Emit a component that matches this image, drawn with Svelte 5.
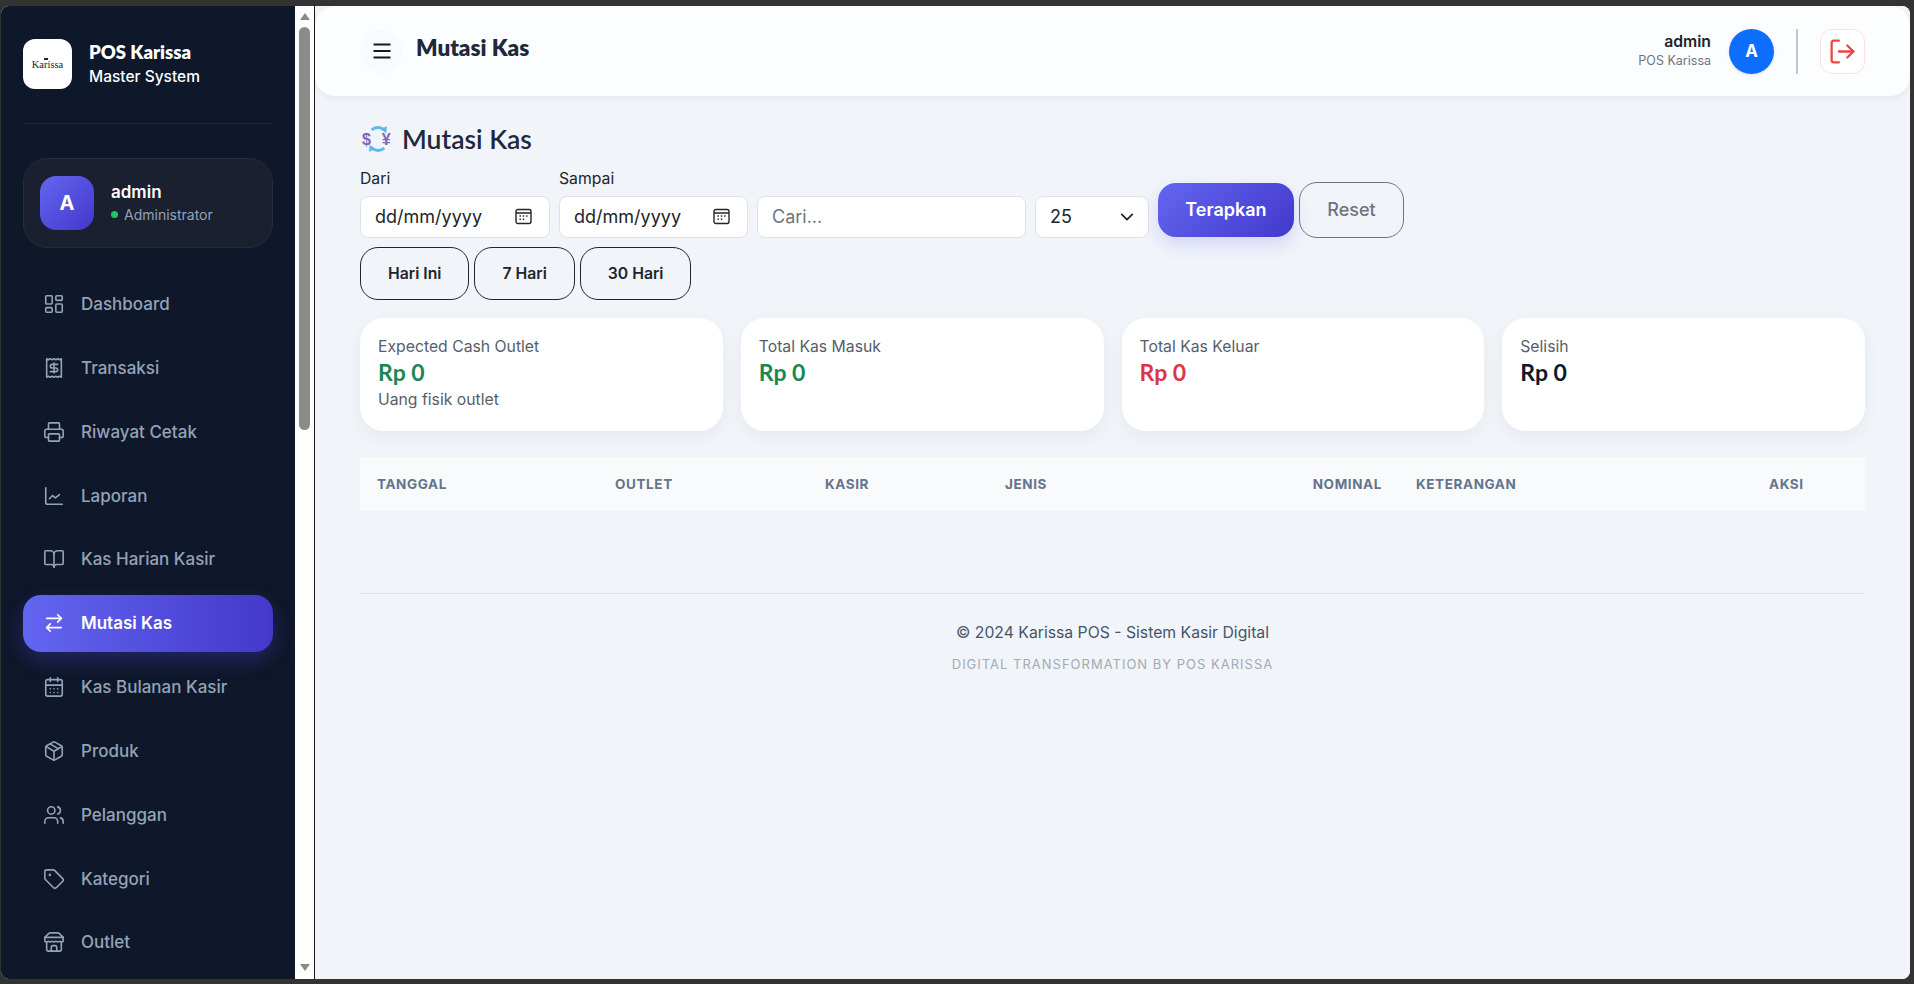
<script>
  const menu = [
    { label: "Dashboard", icon: '<rect x="3" y="3" width="7" height="9" rx="1"/><rect x="14" y="3" width="7" height="5" rx="1"/><rect x="14" y="12" width="7" height="9" rx="1"/><rect x="3" y="16" width="7" height="5" rx="1"/>' },
    { label: "Transaksi", icon: '<path d="M4 2v20l2-1 2 1 2-1 2 1 2-1 2 1 2-1 2 1V2l-2 1-2-1-2 1-2-1-2 1-2-1-2 1Z"/><path d="M16 8h-6a2 2 0 1 0 0 4h4a2 2 0 1 1 0 4H8"/><path d="M12 17.5v-11"/>' },
    { label: "Riwayat Cetak", icon: '<path d="M6 18H4a2 2 0 0 1-2-2v-5a2 2 0 0 1 2-2h16a2 2 0 0 1 2 2v5a2 2 0 0 1-2 2h-2"/><path d="M6 9V3a1 1 0 0 1 1-1h10a1 1 0 0 1 1 1v6"/><rect x="6" y="14" width="12" height="8" rx="1"/>' },
    { label: "Laporan", icon: '<path d="M3 3v16a2 2 0 0 0 2 2h16"/><path d="m7 15 3.5-3.5 3 2.5 4.5-3.5"/>' },
    { label: "Kas Harian Kasir", icon: '<path d="M12 7v14"/><path d="M3 18a1 1 0 0 1-1-1V4a1 1 0 0 1 1-1h5a4 4 0 0 1 4 4 4 4 0 0 1 4-4h5a1 1 0 0 1 1 1v13a1 1 0 0 1-1 1h-6a3 3 0 0 0-3 3 3 3 0 0 0-3-3z"/>' },
    { label: "Mutasi Kas", active: true, icon: '<path d="m16 3 4 4-4 4"/><path d="M20 7H4"/><path d="m8 21-4-4 4-4"/><path d="M4 17h16"/>' },
    { label: "Kas Bulanan Kasir", icon: '<path d="M8 2v4"/><path d="M16 2v4"/><rect x="3" y="4" width="18" height="18" rx="2"/><path d="M3 10h18"/><path d="M8 14h.01"/><path d="M12 14h.01"/><path d="M16 14h.01"/><path d="M8 18h.01"/><path d="M12 18h.01"/><path d="M16 18h.01"/>' },
    { label: "Produk", icon: '<path d="M11 21.73a2 2 0 0 0 2 0l7-4A2 2 0 0 0 21 16V8a2 2 0 0 0-1-1.73l-7-4a2 2 0 0 0-2 0l-7 4A2 2 0 0 0 3 8v8a2 2 0 0 0 1 1.73z"/><path d="M12 22V12"/><path d="m3.3 7 7.703 4.734a2 2 0 0 0 1.994 0L20.7 7"/><path d="m7.5 4.27 9 5.15"/>' },
    { label: "Pelanggan", icon: '<path d="M16 21v-2a4 4 0 0 0-4-4H6a4 4 0 0 0-4 4v2"/><circle cx="9" cy="7" r="4"/><path d="M22 21v-2a4 4 0 0 0-3-3.87"/><path d="M16 3.13a4 4 0 0 1 0 7.75"/>' },
    { label: "Kategori", icon: '<path d="M12.586 2.586A2 2 0 0 0 11.172 2H4a2 2 0 0 0-2 2v7.172a2 2 0 0 0 .586 1.414l8.704 8.704a2.426 2.426 0 0 0 3.42 0l6.58-6.58a2.426 2.426 0 0 0 0-3.42z"/><circle cx="7.5" cy="7.5" r=".5" fill="currentColor"/>' },
    { label: "Outlet", icon: '<path d="m2 7 4.41-4.41A2 2 0 0 1 7.83 2h8.34a2 2 0 0 1 1.42.59L22 7"/><path d="M4 12v8a2 2 0 0 0 2 2h12a2 2 0 0 0 2-2v-8"/><path d="M15 22v-4a2 2 0 0 0-2-2h-2a2 2 0 0 0-2 2v4"/><path d="M2 7h20"/><path d="M22 7v3a2 2 0 0 1-2 2a2.7 2.7 0 0 1-1.59-.63.7.7 0 0 0-.82 0A2.7 2.7 0 0 1 16 12a2.7 2.7 0 0 1-1.59-.63.7.7 0 0 0-.82 0A2.7 2.7 0 0 1 12 12a2.7 2.7 0 0 1-1.59-.63.7.7 0 0 0-.82 0A2.7 2.7 0 0 1 8 12a2.7 2.7 0 0 1-1.59-.63.7.7 0 0 0-.82 0A2.7 2.7 0 0 1 4 12a2 2 0 0 1-2-2V7"/>' },
  ];

  const stats = [
    { label: "Expected Cash Outlet", value: "Rp 0", tone: "green", note: "Uang fisik outlet" },
    { label: "Total Kas Masuk", value: "Rp 0", tone: "green" },
    { label: "Total Kas Keluar", value: "Rp 0", tone: "red" },
    { label: "Selisih", value: "Rp 0", tone: "dark" },
  ];

  const columns = ["Tanggal", "Outlet", "Kasir", "Jenis", "Nominal", "Keterangan", "Aksi"];
  const ranges = ["Hari Ini", "7 Hari", "30 Hari"];
</script>

<div class="window">
  <aside class="sidebar">
    <div class="brand">
      <div class="logo"><i class="crown"></i><span>Karissa</span></div>
      <div class="brand-text">
        <div class="brand-name">POS Karissa</div>
        <div class="brand-sub">Master System</div>
      </div>
    </div>

    <div class="user-card">
      <div class="user-avatar">A</div>
      <div>
        <div class="user-name">admin</div>
        <div class="user-role"><i class="dot"></i>Administrator</div>
      </div>
    </div>

    <nav class="menu">
      {#each menu as item}
        <a class="menu-item" class:active={item.active}>
          <svg class="menu-icon" viewBox="0 0 24 24" fill="none" stroke="currentColor" stroke-width="1.75" stroke-linecap="round" stroke-linejoin="round">{@html item.icon}</svg>
          {item.label}
        </a>
      {/each}
    </nav>
  </aside>

  <div class="scrollbar">
    <div class="arrow up"></div>
    <div class="track"><div class="thumb"></div></div>
    <div class="arrow down"></div>
  </div>

  <main class="main">
    <header class="topbar">
      <button class="burger" aria-label="Menu">
        <svg width="20" height="20" viewBox="0 0 20 20" fill="none" stroke="#111827" stroke-width="2"><path d="M1.500 3.500h17M1.500 10h17M1.500 16.500h17"/></svg>
      </button>
      <div class="page-title">Mutasi Kas</div>
      <div class="account">
        <div class="account-text">
          <div class="account-name">admin</div>
          <div class="account-org">POS Karissa</div>
        </div>
        <div class="account-avatar">A</div>
        <div class="account-sep"></div>
        <button class="logout" aria-label="Keluar">
          <svg width="29" height="29" viewBox="0 0 24 24" fill="none" stroke="#ef4444" stroke-width="1.900" stroke-linecap="round" stroke-linejoin="round"><path d="M9 21H5a2 2 0 0 1-2-2V5a2 2 0 0 1 2-2h4"/><path d="m16 17 5-5-5-5"/><path d="M21 12H9"/></svg>
        </button>
      </div>
    </header>

    <section class="content">
      <h1 class="heading">
        <svg class="heading-icon" viewBox="0 0 30 30" width="32" height="32">
          <text x="0" y="20.500" class="cur">$</text>
          <text x="18.500" y="20.500" class="cur">¥</text>
          <path d="M9 6.500a9 9 0 0 1 12 0" fill="none" stroke="#5ab8ef" stroke-width="2.600"/>
          <path d="M22.800 9.500l.6-6.500-6 2.600z" fill="#5ab8ef"/>
          <path d="M21 23.500a9 9 0 0 1-12 0" fill="none" stroke="#5ab8ef" stroke-width="2.600"/>
          <path d="M7.200 20.500l-.6 6.500 6-2.600z" fill="#5ab8ef"/>
        </svg>
        Mutasi Kas
      </h1>

      <div class="filters">
        <label class="field date-field">
          <span class="field-label">Dari</span>
          <div class="control">
            dd/mm/yyyy
            <svg class="cal" width="17" height="17" viewBox="0 0 17 17" fill="none" stroke="#212529" stroke-width="1.400"><rect x="1" y="1.500" width="15" height="14" rx="2"/><path d="M1 5h15"/><path d="M4.500 8h1.400M7.800 8h1.400M11.100 8h1.400M4.500 11.200h1.400M7.800 11.200h1.400"/></svg>
          </div>
        </label>
        <label class="field date-field second">
          <span class="field-label">Sampai</span>
          <div class="control">
            dd/mm/yyyy
            <svg class="cal" width="17" height="17" viewBox="0 0 17 17" fill="none" stroke="#212529" stroke-width="1.400"><rect x="1" y="1.500" width="15" height="14" rx="2"/><path d="M1 5h15"/><path d="M4.500 8h1.400M7.800 8h1.400M11.100 8h1.400M4.500 11.200h1.400M7.800 11.200h1.400"/></svg>
          </div>
        </label>
        <input class="control search" placeholder="Cari..." />
        <div class="control per-page">
          25
          <svg width="14" height="14" viewBox="0 0 16 16" fill="none" stroke="#212529" stroke-width="2" stroke-linecap="round" stroke-linejoin="round"><path d="m2 5 6 6 6-6"/></svg>
        </div>
        <button class="btn-apply">Terapkan</button>
        <button class="btn-reset">Reset</button>
      </div>

      <div class="ranges">
        {#each ranges as range}
          <button class="range">{range}</button>
        {/each}
      </div>

      <div class="stats">
        {#each stats as stat}
          <div class="stat">
            <div class="stat-label">{stat.label}</div>
            <div class="stat-value {stat.tone}">{stat.value}</div>
            {#if stat.note}<div class="stat-note">{stat.note}</div>{/if}
          </div>
        {/each}
      </div>

      <div class="table-head">
        {#each columns as col}
          <div class="col">{col}</div>
        {/each}
      </div>

      <footer class="footer">
        <div class="copy">© 2024 Karissa POS - Sistem Kasir Digital</div>
        <div class="credit">DIGITAL TRANSFORMATION BY POS KARISSA</div>
      </footer>
    </section>
  </main>
</div>

<style>
  :global(body) {
    margin: 0;
    background: #333;
    font-family: Inter, "Liberation Sans", sans-serif;
  }
  .window {
    display: flex;
    height: 973px;
    margin: 6px 4px 5px 1px;
    border-radius: 8px;
    overflow: hidden;
    background: #f1f4f9;
  }

  /* sidebar */
  .sidebar {
    width: 250px;
    flex: none;
    padding: 33px 22px 0;
    background: #0f172a;
    overflow: hidden;
    color: #fff;
  }
  .brand {
    display: flex;
    align-items: center;
    gap: 17px;
    padding-bottom: 34px;
    border-bottom: 1px solid rgba(255, 255, 255, 0.07);
  }
  .logo {
    position: relative;
    width: 49px;
    height: 50px;
    border-radius: 12px;
    background: #fff;
    display: flex;
    align-items: center;
    justify-content: center;
    color: #222;
    font-family: "Liberation Serif", serif;
    font-size: 10.500px;
  }
  .crown {
    position: absolute;
    left: 21px;
    top: 19px;
    width: 4px;
    height: 2px;
    background: #222;
  }
  .brand-name {
    font-family: Lato, sans-serif;
    font-weight: 800;
    font-size: 18.500px;
    line-height: 24px;
  }
  .brand-sub {
    font-size: 15.500px;
    font-weight: 500;
    line-height: 24px;
    margin-top: 1px;
  }
  .user-card {
    display: flex;
    align-items: center;
    gap: 17px;
    height: 90px;
    margin-top: 34px;
    padding: 0 16px;
    box-sizing: border-box;
    background: #1a2030;
    border: 1px solid #252c3c;
    border-radius: 24px;
    width: 250px;
  }
  .user-avatar {
    width: 54px;
    height: 54px;
    border-radius: 16px;
    background: linear-gradient(135deg, #6366f1, #4338ca);
    display: flex;
    align-items: center;
    justify-content: center;
    font-weight: 700;
    font-size: 20px;
  }
  .user-name {
    font-size: 17px;
    font-weight: 600;
    line-height: 22px;
  }
  .user-role {
    display: flex;
    align-items: center;
    font-size: 14px;
    color: #94a3b8;
    line-height: 22px;
    margin-top: 1px;
  }
  .dot {
    width: 7px;
    height: 7px;
    border-radius: 50%;
    background: #22c55e;
    margin: 0 6px 0 0;
  }
  .menu {
    display: flex;
    flex-direction: column;
    gap: 6.850px;
    margin-top: 27.500px;
  }
  .menu-item {
    display: flex;
    align-items: center;
    gap: 16px;
    flex: none;
    height: 57px;
    padding-left: 20px;
    border-radius: 18px;
    font-size: 17px;
    font-weight: 500;
    color: #94a3b8;
  }
  .menu-item.active {
    color: #fff;
    font-weight: 600;
    background: linear-gradient(90deg, #6366f1, #4338ca);
    box-shadow: 0 8px 20px rgba(79, 70, 229, 0.3);
  }
  .menu-icon {
    width: 22px;
    height: 22px;
    flex: none;
  }

  /* fake scrollbar */
  .scrollbar {
    width: 19px;
    flex: none;
    display: flex;
    flex-direction: column;
    align-items: center;
    background: #fff;
    border-right: 1px solid #1a1a1a;
    padding: 7px 0 8px;
    box-sizing: content-box;
    height: 958px;
  }
  .arrow {
    width: 0;
    height: 0;
    border-left: 5px solid transparent;
    border-right: 5px solid transparent;
    flex: none;
  }
  .arrow.up {
    border-bottom: 7px solid #8a8a8a;
  }
  .arrow.down {
    border-top: 7px solid #8a8a8a;
  }
  .track {
    flex: 1;
    width: 11px;
    padding-top: 7px;
  }
  .thumb {
    height: 403px;
    border-radius: 6px;
    background: #8b8b8b;
  }

  /* main */
  .main {
    flex: 1;
    min-width: 0;
    background: #f1f4f9;
  }
  .topbar {
    display: flex;
    align-items: center;
    height: 90px;
    padding: 0 45px;
    background: #fcfdff;
    border-radius: 20px;
    box-shadow: 0 2px 6px rgba(15, 23, 42, 0.06);
  }
  .burger {
    width: 43px;
    height: 43px;
    border: none;
    border-radius: 50%;
    background: #f8fafc;
    display: flex;
    align-items: center;
    justify-content: center;
    padding: 0;
  }
  .page-title {
    margin: -7px 0 0 13px;
    font-family: Lato, sans-serif;
    font-weight: 800;
    font-size: 22.500px;
    color: #1e293b;
  }
  .account {
    margin-left: auto;
    display: flex;
    align-items: center;
  }
  .account-text {
    text-align: right;
  }
  .account-name {
    font-size: 15.750px;
    font-weight: 600;
    line-height: 20px;
    color: #212529;
  }
  .account-org {
    font-size: 12.500px;
    line-height: 18px;
    color: #6c757d;
  }
  .account-avatar {
    width: 45px;
    height: 45px;
    margin-left: 18px;
    border-radius: 50%;
    background: #0d6efd;
    color: #fff;
    font-weight: 700;
    font-size: 17px;
    display: flex;
    align-items: center;
    justify-content: center;
    box-shadow: 0 1px 3px rgba(0, 0, 0, 0.15);
  }
  .account-sep {
    width: 2px;
    height: 45px;
    margin: 0 22px 0 22px;
    background: #c4c6cb;
  }
  .logout {
    width: 45px;
    height: 45px;
    padding: 0;
    border: 1px solid #fee2e2;
    border-radius: 12px;
    background: #fff;
    display: flex;
    align-items: center;
    justify-content: center;
  }

  .content {
    padding: 0 45px;
  }
  .heading {
    display: flex;
    align-items: center;
    gap: 8px;
    height: 40px;
    margin: 23px 0 0 2px;
    font-family: Lato, sans-serif;
    font-weight: 600;
    font-size: 26.500px;
    color: #1e293b;
  }
  .cur {
    font-family: "Liberation Sans", sans-serif;
    font-size: 15px;
    font-weight: 700;
    fill: #7a68b8;
  }
  .heading-icon {
    flex: none;
  }
  .filters {
    display: flex;
    align-items: flex-end;
    gap: 9px;
    margin-top: 8.500px;
  }
  .field {
    display: flex;
    flex-direction: column;
  }
  .field-label {
    font-size: 15.750px;
    line-height: 22px;
    margin-bottom: 6px;
    color: #212529;
  }
  .control {
    display: flex;
    align-items: center;
    justify-content: space-between;
    height: 42px;
    padding: 0 14px;
    box-sizing: border-box;
    background: #fff;
    border: 1px solid #dee2e6;
    border-radius: 8px;
    font-family: Inter, sans-serif;
    font-size: 18px;
    color: #212529;
  }
  .date-field .control {
    width: 190px;
    padding-right: 17px;
  }
  .date-field.second .control {
    width: 189px;
  }
  .search {
    width: 269px;
  }
  .search::placeholder {
    color: #6c757d;
  }
  .per-page {
    width: 114px;
  }
  .btn-apply {
    width: 136px;
    height: 54px;
    margin-bottom: 1px;
    border: none;
    border-radius: 18px;
    background: linear-gradient(135deg, #6366f1, #4338ca);
    box-shadow: 0 8px 18px rgba(99, 102, 241, 0.2);
    color: #fff;
    font-family: Inter, sans-serif;
    font-size: 18px;
    font-weight: 600;
  }
  .btn-reset {
    width: 105px;
    height: 56px;
    margin-left: -4px;
    border: 1px solid #6c757d;
    border-radius: 18px;
    background: transparent;
    color: #6c757d;
    font-family: Inter, sans-serif;
    font-size: 18px;
    font-weight: 500;
  }
  .ranges {
    display: flex;
    gap: 5px;
    margin-top: 9px;
  }
  .range {
    height: 53px;
    padding: 0 27px;
    border: 1px solid #212529;
    border-radius: 18px;
    background: transparent;
    color: #212529;
    font-family: Inter, sans-serif;
    font-size: 15.750px;
    font-weight: 600;
  }
  .stats {
    display: grid;
    grid-template-columns: repeat(4, 1fr);
    gap: 18px;
    margin-top: 18px;
  }
  .stat {
    height: 113px;
    padding: 18px;
    box-sizing: border-box;
    background: #fff;
    border-radius: 24px;
    box-shadow: 0 6px 18px rgba(15, 23, 42, 0.05);
  }
  .stat-label,
  .stat-note {
    font-size: 15.750px;
    line-height: 22px;
    color: #555e6b;
  }
  .stat-note {
    margin-top: 2px;
  }
  .stat-value {
    font-family: Lato, sans-serif;
    font-size: 23px;
    font-weight: 700;
    line-height: 29px;
  }
  .green { color: #198754; }
  .red { color: #dc3545; }
  .dark { color: #0f172a; }
  .table-head {
    display: grid;
    grid-template-columns: 238px 210px 180px 308px 103px 1fr 113px;
    align-items: center;
    height: 54px;
    margin-top: 26px;
    background: #f8fafc;
  }
  .col {
    padding-left: 17px;
    font-size: 13.500px;
    font-weight: 700;
    letter-spacing: 0.6px;
    text-transform: uppercase;
    color: #64748b;
  }
  .col:nth-child(5) {
    padding: 0 17px 0 0;
    text-align: right;
    grid-column: 5;
  }
  .footer {
    margin-top: 82px;
    padding-top: 28px;
    border-top: 1px solid #dde1e6;
    text-align: center;
  }
  .copy {
    font-size: 15.750px;
    line-height: 22px;
    color: #475569;
  }
  .credit {
    margin-top: 10px;
    font-size: 13px;
    letter-spacing: 1px;
    line-height: 20px;
    color: #a3abb5;
  }
</style>
